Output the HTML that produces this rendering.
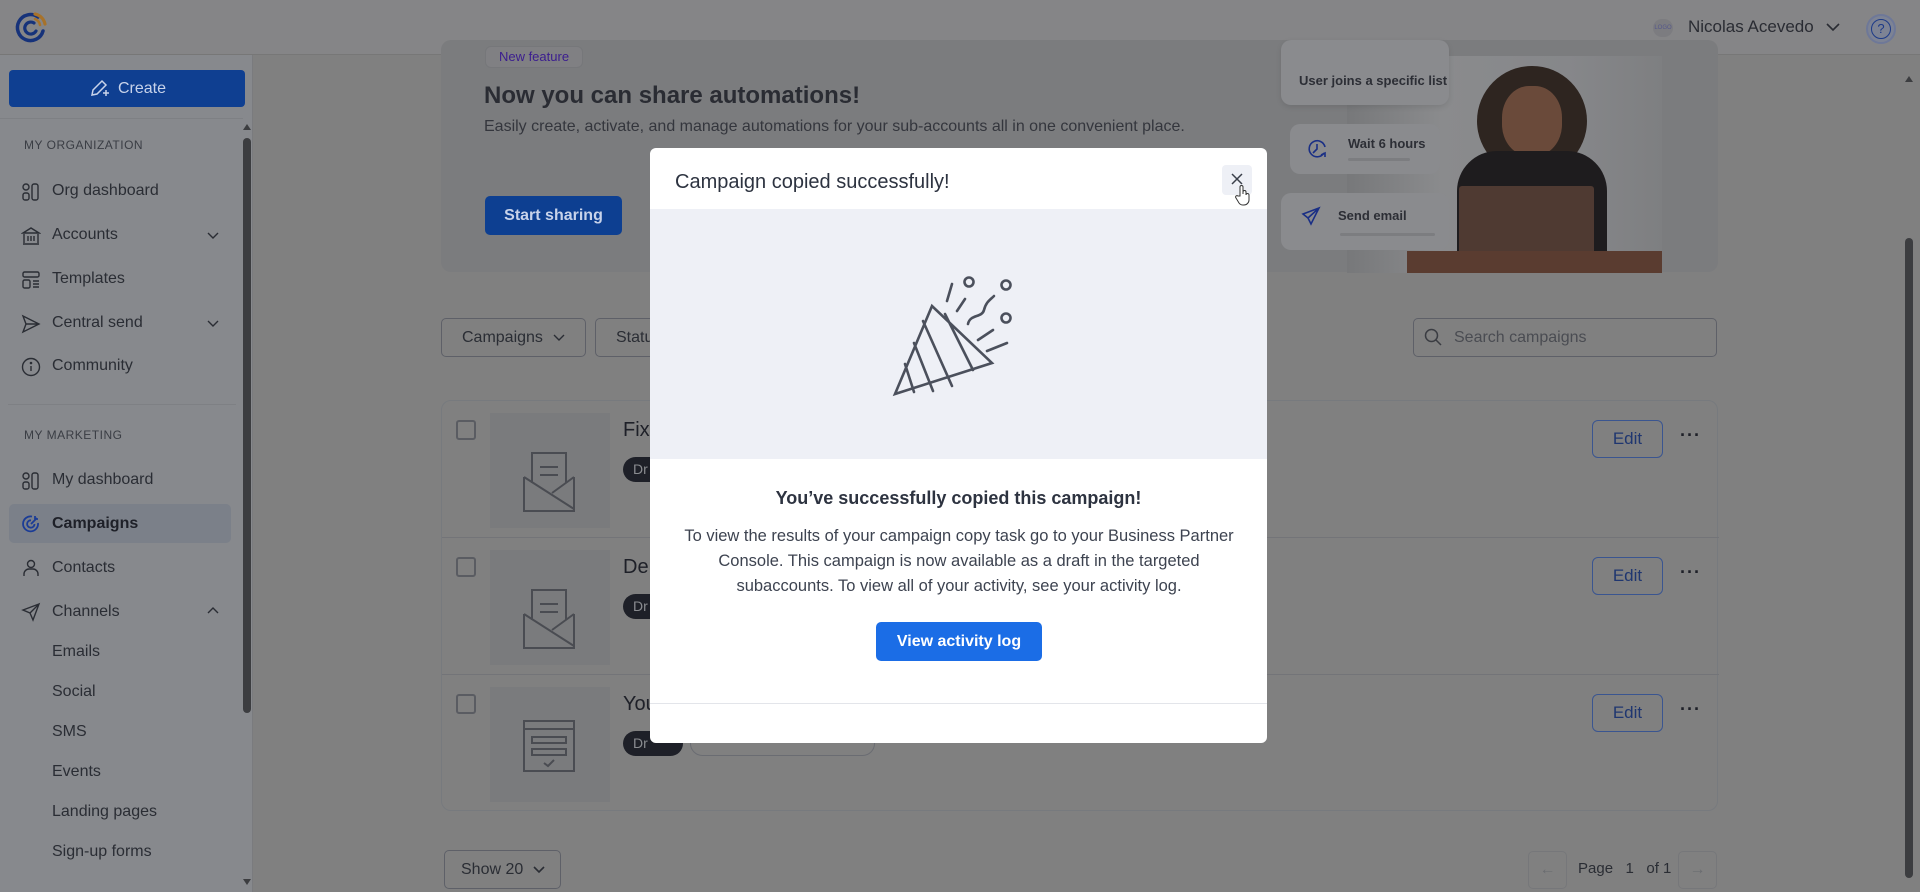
<!DOCTYPE html>
<html><head><meta charset="utf-8">
<style>
*{box-sizing:border-box;margin:0;padding:0}
body{width:1920px;height:892px;overflow:hidden;background:#808080;font-family:"Liberation Sans",sans-serif;color:#2c2f37;position:relative}
.abs{position:absolute}
.top{left:0;top:0;width:1920px;height:55px;background:#858587;border-bottom:1px solid #777}
.side{left:0;top:55px;width:253px;height:837px;background:#87898d;border-right:1px solid #7a7b7e}
.create{left:9px;top:70px;width:236px;height:37px;background:#0f3f91;border-radius:4px;color:#c8d3ea;font-size:16px;display:flex;align-items:center;justify-content:center;gap:8px}
.sec{left:24px;font-size:12px;letter-spacing:.5px;color:#3a3d44}
.it{left:52px;font-size:16px;color:#2a2d34}
.ic{left:21px;width:20px;height:20px}
.chev{left:207px;width:12px;height:12px}
.scroll{left:243px;top:138px;width:8px;height:575px;background:#3c3d40;border-radius:4px}
.banner{left:441px;top:40px;width:1277px;height:232px;background:#7b7c7e;border-radius:10px}
.btnout{border:1px solid #5e6068;border-radius:5px;background:#808080;font-size:16px;color:#2a2d34;display:flex;align-items:center}
.list{left:441px;top:400px;width:1277px;height:411px;border:1px solid #777a7e;border-radius:10px}
.row{left:0;width:1277px;height:137px;border-bottom:1px solid #737478}
.cb{left:14px;top:19px;width:20px;height:20px;border:2px solid #5a5c62;border-radius:3px}
.thumb{left:48px;top:12px;width:120px;height:115px;background:#7a7b7d}
.edit{left:1150px;top:19px;width:71px;height:38px;border:1.5px solid #3a5590;border-radius:6px;color:#1f3670;font-size:17px;display:flex;align-items:center;justify-content:center}
.dots{left:1238px;top:24px;font-size:18px;font-weight:bold;color:#1e2028;letter-spacing:1px}
.badge{left:181px;top:56px;width:60px;height:25px;background:#1e2028;border-radius:13px;color:#8a8c90;font-size:14px;padding-left:10px;line-height:25px}
.title{left:181px;top:18px;font-size:20px;color:#1e2028}
.modal{left:650px;top:148px;width:617px;height:595px;background:#fff;border-radius:6px;overflow:hidden}
</style></head><body>
<div class="abs top">
<svg class="abs" style="left:14px;top:11px" width="34" height="34" viewBox="0 0 34 34"><path d="M24 6 A13 13 0 1 0 29 20" fill="none" stroke="#16327a" stroke-width="3.5" stroke-linecap="round"/><path d="M20 12 A6 6 0 1 0 22 20" fill="none" stroke="#16327a" stroke-width="3.2" stroke-linecap="round"/><path d="M21 3 A13 13 0 0 1 31 13" fill="none" stroke="#a7722a" stroke-width="3.2" stroke-linecap="round"/><path d="M21 8 A8 8 0 0 1 26 14" fill="none" stroke="#a7722a" stroke-width="2.5" stroke-linecap="round"/></svg>
<div class="abs" style="left:1653px;top:19px;width:20px;height:18px;border-radius:9px;background:#7c7c80;font-size:6px;color:#55578a;text-align:center;line-height:18px">LOGO</div>
<div class="abs" style="left:1688px;top:17px;font-size:17px;color:#2a2c33">Nicolas Acevedo</div>
<svg class="abs" style="left:1826px;top:22px" width="14" height="10"><path d="M1 2 L7 8 L13 2" fill="none" stroke="#2a2c33" stroke-width="1.6"/></svg>
<div class="abs" style="left:1866px;top:14px;width:30px;height:30px;border-radius:50%;background:#7d8394;border:2px solid #6e7898"></div>
<div class="abs" style="left:1871px;top:19px;width:20px;height:20px;border-radius:50%;border:1.5px solid #1c3a88;color:#1c3a88;font-size:13px;text-align:center;line-height:17px">?</div>
</div>
<div class="abs side"></div>
<div class="abs create"><svg width="22" height="22" viewBox="0 0 22 22"><path d="M4 17 L5 12 L14 3 L18 7 L9 16 Z" fill="none" stroke="#c8d3ea" stroke-width="1.5"/><path d="M15 15 h6 M18 12 v6" stroke="#c8d3ea" stroke-width="1.5"/></svg>Create</div>
<div class="abs" style="left:0;top:118px;width:243px;height:1px;background:#7e8084"></div>
<svg class="abs" style="left:242px;top:123px" width="10" height="8"><path d="M1 7 L5 1 L9 7Z" fill="#3c3d40"/></svg>
<div class="abs scroll"></div>
<svg class="abs" style="left:242px;top:878px" width="10" height="8"><path d="M1 1 L5 7 L9 1Z" fill="#3c3d40"/></svg>
<div class="abs sec" style="top:138px">MY ORGANIZATION</div>
<svg class="abs ic" style="top:182px" viewBox="0 0 20 20" fill="none" stroke="#2a2d34" stroke-width="1.4"><rect x="2" y="2" width="6" height="6" rx="3"/><rect x="2" y="11" width="6" height="7" rx="2"/><rect x="11" y="2" width="6" height="16" rx="2"/></svg>
<div class="abs it" style="top:182px">Org dashboard</div>
<svg class="abs ic" style="top:226px" viewBox="0 0 20 20" fill="none" stroke="#2a2d34" stroke-width="1.4"><path d="M2 7 L10 2 L18 7 Z M3 8 v9 M17 8 v9 M2 18 h16 M7 10 v5 M10 10 v5 M13 10 v5"/></svg>
<div class="abs it" style="top:226px">Accounts</div>
<svg class="abs chev" style="top:229px" viewBox="0 0 12 12"><path d="M1 4 L6 9 L11 4" fill="none" stroke="#2a2d34" stroke-width="1.4"/></svg>
<svg class="abs ic" style="top:270px" viewBox="0 0 20 20" fill="none" stroke="#2a2d34" stroke-width="1.4"><rect x="2" y="2" width="16" height="5" rx="1.5"/><rect x="2" y="10" width="7" height="8" rx="1.5"/><path d="M12 11 h6 M12 14 h6 M12 17 h6"/></svg>
<div class="abs it" style="top:270px">Templates</div>
<svg class="abs ic" style="top:314px" viewBox="0 0 20 20" fill="none" stroke="#2a2d34" stroke-width="1.4"><path d="M2 2 L18 10 L2 18 L5 10 Z M5 10 h13"/></svg>
<div class="abs it" style="top:314px">Central send</div>
<svg class="abs chev" style="top:317px" viewBox="0 0 12 12"><path d="M1 4 L6 9 L11 4" fill="none" stroke="#2a2d34" stroke-width="1.4"/></svg>
<svg class="abs ic" style="top:357px" viewBox="0 0 20 20" fill="none" stroke="#2a2d34" stroke-width="1.4"><circle cx="10" cy="10" r="8.5"/><path d="M10 9 v5"/><circle cx="10" cy="6" r=".6" fill="#2a2d34"/></svg>
<div class="abs it" style="top:357px">Community</div>
<div class="abs" style="left:8px;top:404px;width:228px;height:1px;background:#7e8084"></div>
<div class="abs sec" style="top:428px">MY MARKETING</div>
<svg class="abs ic" style="top:471px" viewBox="0 0 20 20" fill="none" stroke="#2a2d34" stroke-width="1.4"><rect x="2" y="2" width="6" height="6" rx="3"/><rect x="2" y="11" width="6" height="7" rx="2"/><rect x="11" y="2" width="6" height="16" rx="2"/></svg>
<div class="abs it" style="top:471px">My dashboard</div>
<div class="abs" style="left:9px;top:504px;width:222px;height:39px;background:#7b8089;border-radius:5px"></div>
<svg class="abs ic" style="top:514px" viewBox="0 0 20 20" fill="none" stroke="#1b3c96" stroke-width="1.8"><path d="M17 9 A7.5 7.5 0 1 1 11 2.5"/><path d="M13.5 10 A3.7 3.7 0 1 1 10 6.3"/><path d="M10 10 L16 4 M14 2 v3 h3"/></svg>
<div class="abs it" style="top:515px;font-weight:bold;color:#1e2028">Campaigns</div>
<svg class="abs ic" style="top:558px" viewBox="0 0 20 20" fill="none" stroke="#2a2d34" stroke-width="1.4"><circle cx="10" cy="6" r="3.5"/><path d="M3 18 v-2 a5 5 0 0 1 5 -5 h4 a5 5 0 0 1 5 5 v2"/></svg>
<div class="abs it" style="top:559px">Contacts</div>
<svg class="abs ic" style="top:602px" viewBox="0 0 20 20" fill="none" stroke="#2a2d34" stroke-width="1.4"><path d="M18 2 L2 8 L9 11 L12 18 Z M9 11 L18 2"/></svg>
<div class="abs it" style="top:603px">Channels</div>
<svg class="abs chev" style="top:605px" viewBox="0 0 12 12"><path d="M1 8 L6 3 L11 8" fill="none" stroke="#2a2d34" stroke-width="1.4"/></svg>
<div class="abs it" style="top:643px">Emails</div>
<div class="abs it" style="top:683px">Social</div>
<div class="abs it" style="top:723px">SMS</div>
<div class="abs it" style="top:763px">Events</div>
<div class="abs it" style="top:803px">Landing pages</div>
<div class="abs it" style="top:843px">Sign-up forms</div>
<div class="abs banner"></div>
<div class="abs" style="left:485px;top:46px;width:98px;height:22px;border-radius:6px;background:#808083;border:1px solid #76777a;color:#3b1d8f;font-size:13px;text-align:center;line-height:20px">New feature</div>
<div class="abs" style="left:484px;top:82px;font-size:24px;font-weight:bold;color:#2a2c33">Now you can share automations!</div>
<div class="abs" style="left:484px;top:118px;font-size:16px;color:#34363d">Easily create, activate, and manage automations for your sub-accounts all in one convenient place.</div>
<div class="abs" style="left:485px;top:196px;width:137px;height:39px;background:#0d3f91;border-radius:5px;color:#c8d3ea;font-size:16px;font-weight:bold;text-align:center;line-height:39px">Start sharing</div>
<div class="abs" style="left:1347px;top:56px;width:315px;height:217px;background:linear-gradient(90deg,#77787a 0%,#8a8b8d 30%,#86878a 70%,#7e7f81 100%);overflow:hidden">
<div class="abs" style="left:130px;top:10px;width:110px;height:110px;border-radius:50%;background:#2e2520"></div>
<div class="abs" style="left:155px;top:30px;width:60px;height:70px;border-radius:45%;background:#6a4a3a"></div>
<div class="abs" style="left:110px;top:95px;width:150px;height:120px;border-radius:40px 40px 0 0;background:#1e1c1e"></div>
<div class="abs" style="left:112px;top:130px;width:135px;height:85px;background:#4f3a32;border-radius:3px"></div>
<div class="abs" style="left:60px;top:195px;width:255px;height:22px;background:#5a3c30"></div>
</div>
<div class="abs" style="left:1281px;top:40px;width:168px;height:65px;background:#8a8b8e;border-radius:10px;box-shadow:0 2px 6px rgba(0,0,0,.1)"></div>
<div class="abs" style="left:1299px;top:73px;font-size:13px;font-weight:bold;color:#2c2e35">User joins a specific list</div>
<div class="abs" style="left:1290px;top:124px;width:150px;height:50px;background:#8a8b8e;border-radius:10px"></div>
<svg class="abs" style="left:1306px;top:137px" width="22" height="24" viewBox="0 0 22 24" fill="none" stroke="#1a2f85" stroke-width="1.6"><path d="M18 16 A8 8 0 1 1 19 10"/><path d="M11 7 v5 l-4 4 M15 18 l4 -2 l0 4"/></svg>
<div class="abs" style="left:1348px;top:136px;font-size:13px;font-weight:bold;color:#2c2e35">Wait 6 hours</div>
<div class="abs" style="left:1348px;top:158px;width:62px;height:3px;background:#7c7d80;border-radius:2px"></div>
<div class="abs" style="left:1281px;top:193px;width:168px;height:57px;background:#8a8b8e;border-radius:10px"></div>
<svg class="abs" style="left:1301px;top:206px" width="20" height="20" viewBox="0 0 20 20" fill="none" stroke="#1a2f85" stroke-width="1.6"><path d="M18 2 L2 8 L7 12 L10 18 Z M7 12 L18 2"/></svg>
<div class="abs" style="left:1338px;top:208px;font-size:13px;font-weight:bold;color:#2c2e35">Send email</div>
<div class="abs" style="left:1340px;top:233px;width:95px;height:3px;background:#7c7d80;border-radius:2px"></div>
<div class="abs btnout" style="left:441px;top:318px;width:145px;height:39px;padding-left:20px">Campaigns <svg style="margin-left:10px" width="12" height="8"><path d="M1 1 L6 6 L11 1" fill="none" stroke="#2a2d34" stroke-width="1.4"/></svg></div>
<div class="abs btnout" style="left:595px;top:318px;width:120px;height:39px;padding-left:20px">Status</div>
<div class="abs btnout" style="left:1413px;top:318px;width:304px;height:39px;padding-left:40px;color:#4a4c52">Search campaigns</div>
<svg class="abs" style="left:1424px;top:328px" width="18" height="18" viewBox="0 0 18 18" fill="none" stroke="#3a3c42" stroke-width="1.5"><circle cx="7.5" cy="7.5" r="6"/><path d="M12 12 L17 17"/></svg>
<div class="abs list">
<div class="abs row" style="top:0"><div class="abs cb"></div><div class="abs thumb"><svg class="abs" style="left:32px;top:38px" width="54" height="62" viewBox="0 0 54 62" fill="none" stroke="#4a4c52" stroke-width="2"><path d="M2 26 V60 H52 V26 M2 26 L52 58 M52 26 L30 42 M10 32 V2 H44 V32 M18 16 H36 M18 24 H36"/></svg></div><div class="abs title">Fix</div><div class="abs badge">Dr</div><div class="abs edit">Edit</div><div class="abs dots">···</div></div>
<div class="abs row" style="top:137px"><div class="abs cb"></div><div class="abs thumb"><svg class="abs" style="left:32px;top:38px" width="54" height="62" viewBox="0 0 54 62" fill="none" stroke="#4a4c52" stroke-width="2"><path d="M2 26 V60 H52 V26 M2 26 L52 58 M52 26 L30 42 M10 32 V2 H44 V32 M18 16 H36 M18 24 H36"/></svg></div><div class="abs title">Dem</div><div class="abs badge">Dr</div><div class="abs edit">Edit</div><div class="abs dots">···</div></div>
<div class="abs row" style="top:274px;border-bottom:none"><div class="abs cb"></div><div class="abs thumb"><svg class="abs" style="left:32px;top:32px" width="54" height="62" viewBox="0 0 54 62" fill="none" stroke="#4a4c52" stroke-width="2"><path d="M2 2 H52 V52 H2 Z M2 10 H52 M10 18 H44 V24 H10 Z M10 30 H44 V36 H10 Z M22 44 L26 47 L32 41"/></svg></div><div class="abs title">You</div><div class="abs badge">Dr</div><div class="abs" style="left:248px;top:56px;width:185px;height:25px;border:1px solid #6a6c72;border-radius:13px"></div><div class="abs edit">Edit</div><div class="abs dots">···</div></div>
</div>
<div class="abs btnout" style="left:444px;top:850px;width:117px;height:39px;padding-left:16px">Show 20 <svg style="margin-left:10px" width="12" height="8"><path d="M1 1 L6 6 L11 1" fill="none" stroke="#2a2d34" stroke-width="1.6"/></svg></div>
<div class="abs" style="left:1528px;top:851px;width:39px;height:38px;border:1px solid #76777a;border-radius:5px;color:#6a6c70;text-align:center;line-height:36px">←</div>
<div class="abs" style="left:1578px;top:860px;font-size:15px;color:#2a2d34">Page&nbsp;&nbsp;&nbsp;1&nbsp;&nbsp;&nbsp;of 1</div>
<div class="abs" style="left:1678px;top:851px;width:39px;height:38px;border:1px solid #76777a;border-radius:5px;color:#6a6c70;text-align:center;line-height:36px">→</div>
<div class="abs" style="left:1905px;top:70px;width:8px;height:8px"><svg width="8" height="8"><path d="M0 7 L4 1 L8 7Z" fill="#3c3d40"/></svg></div>
<div class="abs" style="left:1905px;top:238px;width:8px;height:640px;background:#3c3d40;border-radius:4px"></div>
<div class="abs modal">
<div class="abs" style="left:25px;top:23px;font-size:20px;color:#2d3340">Campaign copied successfully!</div>
<div class="abs" style="left:572px;top:17px;width:30px;height:30px;background:#eef0f6;border-radius:4px"></div>
<svg class="abs" style="left:580px;top:24px" width="14" height="14"><path d="M2 2 L12 12 M12 2 L2 12" stroke="#3a3f4a" stroke-width="1.5"/></svg>
<svg class="abs" style="left:585px;top:36px" width="18" height="22" viewBox="0 0 18 22"><path d="M5 12 V3 a1.5 1.5 0 0 1 3 0 V10 V8 a1.5 1.5 0 0 1 3 0 V11 a1.5 1.5 0 0 1 3 0 V16 a5 5 0 0 1 -5 5 H8 a5 5 0 0 1 -4 -2 L1 14 a1.4 1.4 0 0 1 2 -2 Z" fill="#fff" stroke="#333" stroke-width="1"/></svg>
<div class="abs" style="left:0;top:61px;width:617px;height:250px;background:#eef0f6"></div>
<svg class="abs" style="left:240px;top:118px" width="140" height="140" viewBox="0 0 140 140" fill="none" stroke="#4b505c" stroke-width="2.6" stroke-linecap="round"><path d="M42 40 L5 128 L102 97 Z M33 55 L62 120 M24 77 L43 125 M15 98 L24 126 M55 48 L83 104"/><path d="M57 35 L62 18 M67 45 L75 33"/><circle cx="79" cy="16" r="4.5"/><circle cx="116" cy="19" r="4.5"/><circle cx="116" cy="52" r="4.5"/><path d="M78 58 C80 48 92 52 94 44 C96 36 100 34 104 30"/><path d="M88 74 L103 64 M97 85 L117 77"/></svg>
<div class="abs" style="left:0;top:340px;width:617px;text-align:center;font-size:18px;font-weight:bold;color:#2d3340">You’ve successfully copied this campaign!</div>
<div class="abs" style="left:24px;top:376px;width:570px;text-align:center;font-size:16.5px;line-height:25px;color:#3d4350">To view the results of your campaign copy task go to your Business Partner Console. This campaign is now available as a draft in the targeted subaccounts. To view all of your activity, see your activity log.</div>
<div class="abs" style="left:226px;top:474px;width:166px;height:39px;background:#1b6de6;border-radius:5px;color:#fff;font-size:16px;font-weight:bold;text-align:center;line-height:39px">View activity log</div>
<div class="abs" style="left:0;top:555px;width:617px;height:1px;background:#e3e5ea"></div>
</div>
</body></html>
